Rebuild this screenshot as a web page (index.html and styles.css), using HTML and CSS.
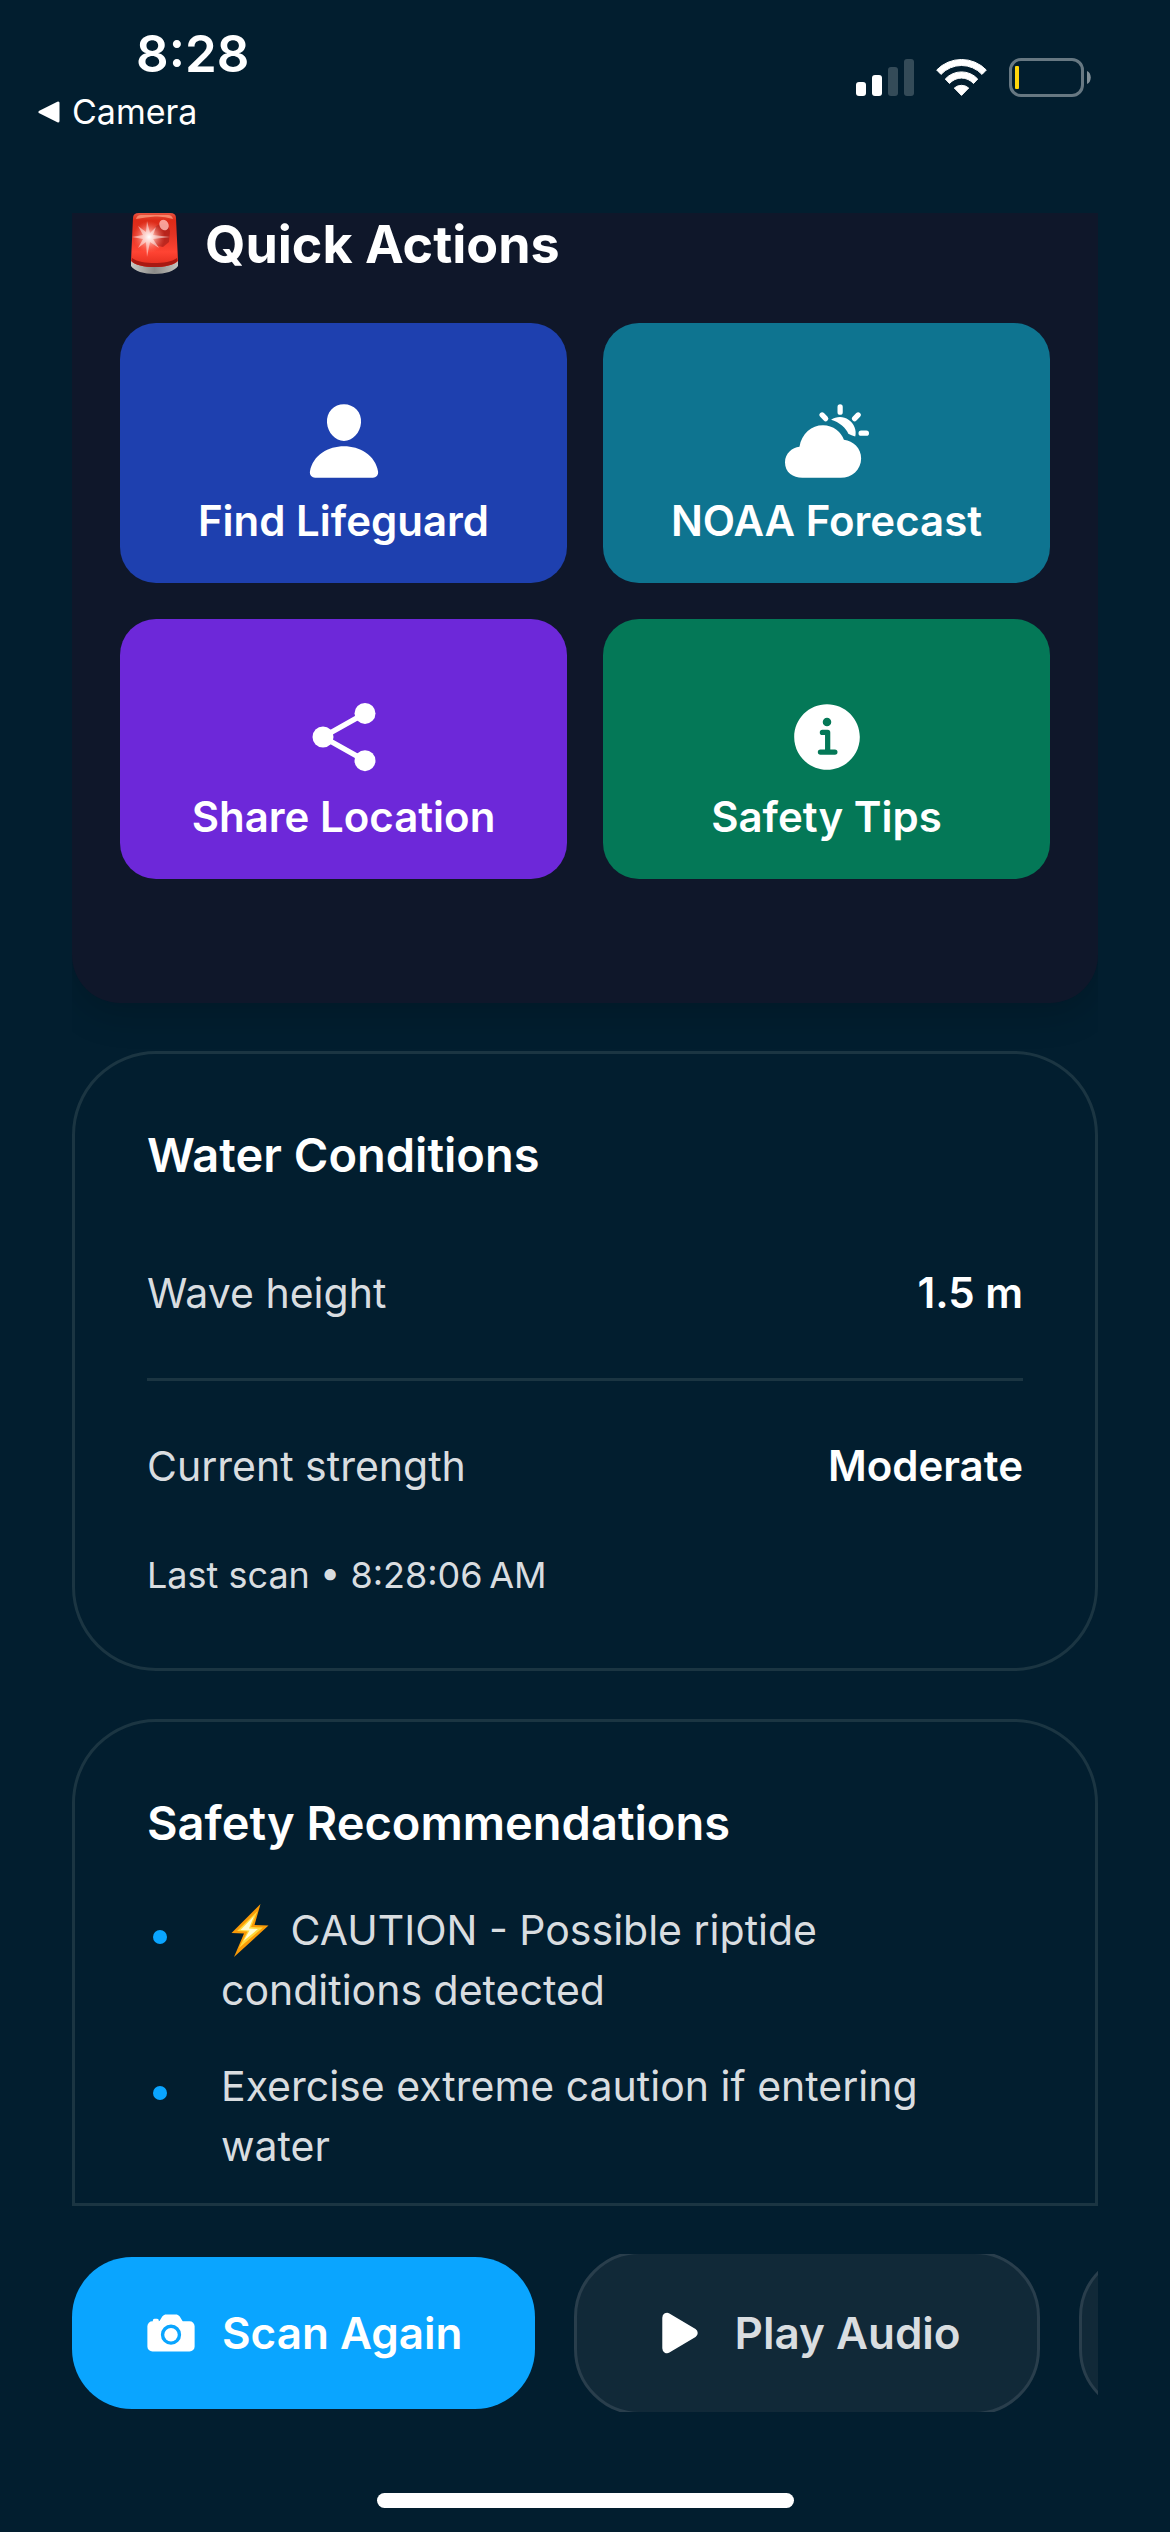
FILE: index.html
```html
<!DOCTYPE html>
<html lang="en">
<head>
<meta charset="utf-8">
<meta name="viewport" content="width=device-width, initial-scale=1">
<title>Beach Safety</title>
<link rel="stylesheet" href="styles.css">
</head>
<body>
<div class="app">
  <header class="status">
    <div class="status-left">
      <time class="clock">8:28</time>
      <a class="back" href="#camera">
        <svg width="22" height="22" viewBox="0 0 22 22" aria-hidden="true"><path d="M20 2v18L2 11z" fill="#fff" stroke="#fff" stroke-width="3" stroke-linejoin="round"/></svg>
        Camera
      </a>
    </div>
    <div class="status-right">
      <svg width="58" height="37" viewBox="0 0 58 37" fill="#fff" role="img" aria-label="Signal">
        <rect y="23" width="10" height="14" rx="3"/><rect x="16" y="16" width="10" height="21" rx="3"/>
        <rect x="32" y="8" width="10" height="29" rx="3" opacity=".2"/><rect x="48" width="10" height="37" rx="3" opacity=".2"/>
      </svg>
      <svg width="51" height="37" viewBox="0 0 51 37" fill="#fff" stroke="#fff" stroke-linejoin="round" role="img" aria-label="Wi-Fi">
        <path d="M.7 11A34.5 34.5 0 0 1 50.3 11L46 15.4A28 28 0 0 0 5 15.4z"/>
        <path d="M9.3 20A22 22 0 0 1 41.700 20L37.500 24.500A16 16 0 0 0 13.500 24.500z"/>
        <path d="M18.300 29A11 11 0 0 1 32.700 29L25.500 36.400z"/>
      </svg>
      <svg width="82" height="39" viewBox="0 0 82 39" role="img" aria-label="Battery low">
        <rect x="1.500" y="1.500" width="72" height="36" rx="10.500" fill="none" stroke="#fff" stroke-opacity=".4" stroke-width="3"/>
        <path d="M78 13c5 2 5 11 0 13z" fill="#fff" opacity=".5"/>
        <rect x="6" y="8" width="4" height="23" rx="1" fill="#ffd60a"/>
      </svg>
    </div>
  </header>

  <main class="feed">
    <section class="actions">
      <h2 class="actions-title">
        <svg class="siren" width="47" height="61" viewBox="0 0 47 61" role="img" aria-label="Alert">
          <defs>
            <linearGradient id="glass" x1="0" y1="0" x2="0" y2="1"><stop offset="0" stop-color="#e8523f"/><stop offset=".14" stop-color="#dc2a17"/><stop offset=".4" stop-color="#e23424"/><stop offset=".72" stop-color="#ff4433"/><stop offset="1" stop-color="#e02a1c"/></linearGradient>
            <linearGradient id="base" x1="0" y1="0" x2="1" y2="0"><stop offset="0" stop-color="#c9c9c5"/><stop offset=".5" stop-color="#8b8b88"/><stop offset="1" stop-color="#c4c4c0"/></linearGradient>
            <radialGradient id="glow"><stop offset="0" stop-color="#fff"/><stop offset=".35" stop-color="#ffb9ae" stop-opacity=".8"/><stop offset="1" stop-color="#ff6a58" stop-opacity="0"/></radialGradient>
          </defs>
          <path d="M0 48h47v5c-3 5-13 8-23.500 8S3 58 0 53z" fill="url(#base)"/>
          <path d="M2 5q0-5 6-5h31q6 0 6 5l2 43c-4 4-13 6-23.500 6S4 52 0 48z" fill="url(#glass)"/>
          <path d="M1 45c5 4 14 5 22.500 5S41 49 46 45l.5 3c-4 4-13 6-23 6S4 52 .5 48z" fill="#a81912"/>
          <path d="M5 6q1-4 5-4h27q4 0 5 4-9-3-18-2.500T5 6z" fill="#ff9b7d" opacity=".75"/>
          <path d="M24 14q12-8 15 4l-1 11-6 5-9-2z" fill="#9d1b17" opacity=".6"/>
          <ellipse cx="33" cy="12" rx="4.500" ry="5.500" transform="rotate(-30 33 12)" fill="#ffb5ad" opacity=".85"/>
          <circle cx="18" cy="24" r="16" fill="url(#glow)"/>
          <path d="M16 8l3 12 6-6-3 8 17 2-17 2 6 9-9-6-3 15-1-15-8 6 5-9-11-2 11-2-5-9 8 6z" fill="#fff" opacity=".5"/>
        </svg>
        Quick Actions
      </h2>
      <div class="tiles">
        <button class="tile tile-blue" type="button">
          <svg class="tile-icon" viewBox="0 0 512 512" aria-hidden="true"><path d="M332.64 64.58C313.18 43.57 286 32 256 32c-30.16 0-57.43 11.5-76.8 32.38-19.58 21.11-29.12 49.8-26.88 80.78C156.76 206.28 203.27 256 256 256s99.16-49.71 103.67-110.82c2.27-30.7-7.33-59.33-27.03-80.6zM432 480H80a31 31 0 01-24.200-11.13c-6.500-7.770-9.120-18.380-7.180-29.110C57.060 392.940 83.400 353.610 124.800 326c36.780-24.510 83.370-38 131.200-38s94.420 13.500 131.200 38c41.400 27.600 67.740 66.930 76.180 113.750 1.940 10.730-.68 21.340-7.180 29.110A31 31 0 01432 480z"/></svg>
          Find Lifeguard
        </button>
        <button class="tile tile-teal" type="button">
          <svg class="tile-icon" viewBox="0 0 512 512" aria-hidden="true">
            <path d="M340 480H106c-29.500 0-54.920-7.830-73.530-22.640C11.230 440.440 0 415.350 0 384.800c0-26.660 10.080-49.800 29.140-66.910 15.240-13.680 36.170-23.210 59-26.840 6.500-39.050 23.920-72.140 50.400-95.730A140.240 140.240 0 01232 160c30.230 0 58.480 9.390 81.710 27.170a142.690 142.690 0 0145.360 60.660c29.410 4.820 54.720 17.110 73.190 35.540C453 304.110 464 331.710 464 363.200c0 32.850-13.130 62.870-37 84.520-22.890 20.820-53.800 32.280-87 32.280z"/>
            <path d="M281 127C312 105 356 104 387 126C421 149 438 189 428 229Q404 223 386 212C375 181 329 139 281 127z"/>
            <path d="M336 48v32M464 208h32M424 120l22-23M248 120l-22-23" stroke="#fff" stroke-width="32" stroke-linecap="round"/>
          </svg>
          NOAA Forecast
        </button>
        <button class="tile tile-purple" type="button">
          <svg class="tile-icon" viewBox="0 0 512 512" aria-hidden="true"><path d="M384 112L128 256l256 144" fill="none" stroke="#fff" stroke-width="32"/><circle cx="128" cy="256" r="64"/><circle cx="384" cy="112" r="64"/><circle cx="384" cy="400" r="64"/></svg>
          Share Location
        </button>
        <button class="tile tile-green" type="button">
          <svg class="tile-icon" viewBox="0 0 512 512" aria-hidden="true"><path d="M256 56C145.720 56 56 145.720 56 256s89.720 200 200 200 200-89.720 200-200S366.280 56 256 56zm0 82a26 26 0 11-26 26 26 26 0 0126-26zm48 226h-88a16 16 0 010-32h28v-88h-16a16 16 0 010-32h32a16 16 0 0116 16v104h28a16 16 0 010 32z"/></svg>
          Safety Tips
        </button>
      </div>
    </section>

    <section class="card">
      <h2 class="card-title">Water Conditions</h2>
      <dl class="stats">
        <div class="stat"><dt>Wave height</dt><dd>1.5 m</dd></div>
        <div class="stat"><dt>Current strength</dt><dd>Moderate</dd></div>
      </dl>
      <p class="scan-time">Last scan • 8:28:06&#8239;AM</p>
    </section>

    <section class="card card-open">
      <h2 class="card-title">Safety Recommendations</h2>
      <ul class="tips">
        <li class="tip">
          <span><svg class="bolt" width="38" height="54" viewBox="0 0 38 54" role="img" aria-label="Lightning"><path d="M29.500 0L.5 29 13 29.500 3 53 37.500 21.500 23.500 21z" fill="#f99a07"/><path d="M26.500 7L6 27 16.500 27.500 8 44 32 23.500 20 23z" fill="#ffd83a"/><path d="M23 12L9.500 26 18.500 26.500 12.500 37 27 25 18 24.500z" fill="#fffbd0"/></svg> CAUTION - Possible riptide conditions detected</span>
        </li>
        <li class="tip"><span>Exercise extreme caution if entering water</span></li>
      </ul>
    </section>
  </main>

  <nav class="bar" aria-label="Scan actions">
    <button class="pill pill-primary" type="button">
      <svg class="pill-icon" viewBox="0 0 512 512" aria-hidden="true"><circle cx="256" cy="272" r="64"/><path d="M432 144h-59c-3 0-6.720-1.940-9.620-5l-25.940-40.940a15.520 15.520 0 00-1.370-1.850C327.110 85.760 315 80 302 80h-92c-13 0-25.110 5.760-34.070 16.210a15.520 15.520 0 00-1.370 1.850l-25.940 41c-2.220 2.420-5.340 5-8.620 5v-8a16 16 0 00-16-16h-24a16 16 0 00-16 16v8H80a48.050 48.050 0 00-48 48V384a48.050 48.050 0 0048 48h352a48.050 48.050 0 0048-48V192a48.050 48.050 0 00-48-48zM256 368a96 96 0 1196-96 96.110 96.110 0 01-96 96z"/></svg>
      Scan Again
    </button>
    <button class="pill pill-ghost" type="button">
      <svg class="pill-icon" viewBox="0 0 512 512" aria-hidden="true"><path d="M133 440a35.370 35.370 0 01-17.500-4.670c-12-6.800-19.460-20-19.460-34.330V111c0-14.370 7.460-27.530 19.460-34.330a35.130 35.130 0 0135.770.45l247.850 148.360a36 36 0 010 61l-247.890 148.400A35.500 35.500 0 01133 440z" stroke="#fff" stroke-width="16"/></svg>
      Play Audio
    </button>
    <button class="pill pill-ghost" type="button" aria-label="More"></button>
  </nav>
  <div class="home"></div>
</div>
</body>
</html>
```
FILE: styles.css
```css
* { box-sizing: border-box; }

body {
  margin: 0;
  background: #021e2f;
  color: #fff;
  font-family: Inter, "Liberation Sans", sans-serif;
  font-size: 42px;
  line-height: 60px;
}

h2, p, dl, dd, ul { margin: 0; padding: 0; }
button { border: 0; color: inherit; font: inherit; cursor: pointer; }
svg { display: block; flex: none; }

.app {
  display: flex;
  flex-direction: column;
  min-height: 100vh;
}

/* Status bar */
.status {
  display: flex;
  justify-content: space-between;
  min-height: 213px;
  padding: 24px 79px 0 38px;
}
.status-left { display: flex; flex-direction: column; gap: 8px; }
.clock { padding-left: 98px; font-size: 51px; font-weight: 600; }
.back {
  display: flex;
  align-items: center;
  gap: 12px;
  color: #fff;
  font-size: 34px;
  line-height: 40px;
  text-decoration: none;
}
.status-right {
  display: flex;
  align-items: center;
  gap: 22px;
  height: 39px;
  margin-top: 34px;
}

/* Scrolling content */
.feed {
  display: flex;
  flex-direction: column;
  gap: 48px;
  margin: 0 72px;
  overflow: hidden;
}

.actions {
  padding: 0 48px 124px;
  border-radius: 0 0 48px 48px;
  background: #0f172a;
  box-shadow: 0 12px 36px rgba(0, 0, 0, .16);
}
.actions-title {
  display: flex;
  align-items: flex-start;
  gap: 27px;
  padding-left: 11px;
  font-size: 52px;
  font-weight: 700;
  line-height: 63px;
}
.tiles {
  display: grid;
  grid-template-columns: 1fr 1fr;
  gap: 36px;
  margin-top: 47px;
}
.tile {
  display: flex;
  flex-direction: column;
  align-items: center;
  gap: 8px;
  padding: 76px 12px 32px;
  border-radius: 36px;
  font-weight: 600;
}
.tile-icon { width: 84px; height: 84px; fill: #fff; }
.tile-blue { background: #1e40af; }
.tile-teal { background: #0e7490; }
.tile-purple { background: #6d28d9; }
.tile-green { background: #047857; }

.card {
  padding: 72px 72px 69px;
  border: 3px solid #1b3542;
  border-radius: 84px;
}
.card-open {
  padding-bottom: 27px;
  border-radius: 84px 84px 0 0;
}
.card-title { font-size: 47px; font-weight: 600; line-height: 58px; }

.stats { margin-top: 24px; }
.stat {
  display: flex;
  justify-content: space-between;
  padding: 55px 0;
}
.stat + .stat { border-top: 3px solid #1b3542; }
.stat dt { color: #d9dde0; font-size: 41px; }
.stat dd { font-weight: 600; }
.scan-time { color: #d9dde0; font-size: 36px; line-height: 48px; }

.tips {
  display: flex;
  flex-direction: column;
  gap: 36px;
  margin-top: 48px;
  list-style: none;
}
.tip {
  display: flex;
  gap: 54px;
  padding: 0 36px 0 6px;
  color: #d9dde0;
  font-size: 41px;
}
.tip::before {
  content: "";
  flex: none;
  width: 14px;
  height: 14px;
  margin-top: 30px;
  border-radius: 50%;
  background: #0aa5ff;
}
.bolt { display: inline-block; margin: 0 10px; vertical-align: -13px; }

/* Bottom actions */
.bar {
  display: flex;
  align-items: center;
  gap: 39px;
  height: 158px;
  margin: 48px 72px 0;
  overflow: hidden;
}
.pill {
  display: flex;
  flex: none;
  align-items: center;
  gap: 24px;
  padding: 46px 72px;
  border-radius: 60px;
  font-size: 44px;
  font-weight: 600;
}
.pill-icon { width: 54px; height: 54px; fill: #fff; }
.pill-primary { background: #0aa5ff; }
.pill-ghost {
  gap: 28px;
  min-height: 164px;
  padding: 46px 76px;
  border: 3px solid #293e4c;
  border-radius: 66px;
  background: #112938;
  color: #d9dde0;
}

.home {
  width: 417px;
  height: 15px;
  margin: auto auto 24px;
  border-radius: 8px;
  background: #fff;
}
```
